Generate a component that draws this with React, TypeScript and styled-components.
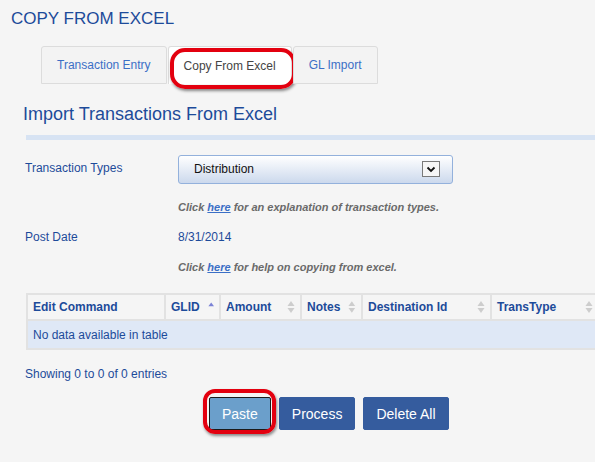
import * as React from 'react';
import styled, { createGlobalStyle } from 'styled-components';

const GlobalStyle = createGlobalStyle`
    html, body {
        margin: 0;
        padding: 0;
        background: #f5f5f5;
        font-family: "Liberation Sans", Arial, sans-serif;
        overflow: hidden;
    }
`;

const Page = styled.div`
    width: 595px;
    height: 462px;
    overflow: hidden;
    display: flex;
    flex-direction: column;
`;

const PageTitle = styled.h1`
    margin: 9px 0 0 11px;
    font-size: 17px;
    line-height: 20px;
    font-weight: normal;
    color: #1d4b9a;
`;

const TabBar = styled.div`
    display: flex;
    gap: 1px;
    margin: 17px 0 0 41px;
`;

const Tab = styled.div<{ $active?: boolean }>`
    position: relative;
    height: 38px;
    box-sizing: border-box;
    padding: 0 15px;
    display: flex;
    align-items: center;
    font-size: 12px;
    color: ${(p) => (p.$active ? '#444' : '#3b6fc6')};
    background: ${(p) => (p.$active ? '#fff' : '#f3f3f3')};
    border: 1px solid #dcdcdc;
    border-bottom: ${(p) => (p.$active ? 'none' : '1px solid #dcdcdc')};
    border-radius: 3px 3px 0 0;
`;

const Highlight = styled.span<{ $t: number; $r: number; $b: number; $l: number; $rad: number }>`
    position: absolute;
    top: ${(p) => p.$t}px;
    right: ${(p) => p.$r}px;
    bottom: ${(p) => p.$b}px;
    left: ${(p) => p.$l}px;
    border: 4px solid #e3000f;
    border-radius: ${(p) => p.$rad}px;
    box-shadow: 1px 2px 3px rgba(0, 0, 0, 0.45);
    pointer-events: none;
`;

const SectionTitle = styled.h2`
    margin: 19px 0 0 23px;
    font-size: 18px;
    line-height: 22px;
    font-weight: normal;
    color: #1d4b9a;
`;

const Divider = styled.div`
    margin: 10px 0 0 26px;
    height: 5px;
    background: #d7e3f3;
`;

const FormRow = styled.div<{ $h: number; $top: number }>`
    display: flex;
    align-items: center;
    height: ${(p) => p.$h}px;
    margin-top: ${(p) => p.$top}px;
    padding-left: 25px;
`;

const Label = styled.div<{ $shift?: number }>`
    width: 153px;
    font-size: 12px;
    color: #1d4b9a;
    margin-top: ${(p) => p.$shift ?? 0}px;
`;

const Value = styled.div`
    font-size: 12px;
    color: #1d4b9a;
`;

const Select = styled.div`
    width: 275px;
    height: 29px;
    box-sizing: border-box;
    border: 1px solid #93b1dc;
    border-radius: 3px;
    background: linear-gradient(#ffffff, #ccd9ed);
    display: flex;
    align-items: center;
    justify-content: space-between;
    padding: 0 12px 0 15px;
    font-size: 12px;
    color: #111;
`;

const ArrowBox = styled.span`
    width: 18px;
    height: 16px;
    box-sizing: border-box;
    border: 1px solid #7a7a7a;
    background: #f6f6f6;
    display: flex;
    align-items: center;
    justify-content: center;
`;

const Hint = styled.div<{ $top: number }>`
    margin-top: ${(p) => p.$top}px;
    font-size: 11px;
    font-style: italic;
    font-weight: bold;
    color: #6a6a6a;
    padding-left: 178px;
`;

const HintLink = styled.a`
    color: #3b6fc6;
    text-decoration: underline;
`;

const TableWrap = styled.div`
    margin: 20px 0 0 26px;
`;

const Table = styled.table`
    border-collapse: collapse;
    width: 572px;
    table-layout: fixed;
    border: 2px solid #e2e2e2;
`;

const HeadCell = styled.th<{ $w: number }>`
    width: ${(p) => p.$w}px;
    height: 26px;
    padding: 0 5px;
    box-sizing: border-box;
    text-align: left;
    font-size: 12px;
    font-weight: bold;
    color: #1d4b9a;
    background: #f5f5f5;
    border: 2px solid #e2e2e2;
`;

const HeadInner = styled.div<{ $tight?: boolean }>`
    display: flex;
    align-items: center;
    justify-content: ${(p) => (p.$tight ? 'flex-start' : 'space-between')};
    gap: 8px;
`;

const BodyCell = styled.td`
    height: 27px;
    padding: 0 5px;
    font-size: 12px;
    color: #1d4b9a;
    background: #dfe8f6;
    border: 2px solid #e2e2e2;
`;

const Info = styled.div`
    margin: 17px 0 0 25px;
    font-size: 12px;
    color: #1d4b9a;
`;

const ButtonRow = styled.div`
    display: flex;
    gap: 8px;
    margin: 16px 0 0 209px;
`;

const ButtonWrap = styled.div`
    position: relative;
    display: flex;
`;

const Button = styled.button<{ $light?: boolean }>`
    height: 33px;
    padding: 0 12px;
    font-family: "Liberation Sans", Arial, sans-serif;
    font-size: 14px;
    color: #fff;
    background: ${(p) => (p.$light ? '#6b9fcb' : '#355c9e')};
    border: 1px solid ${(p) => (p.$light ? '#1a1a1a' : '#355c9e')};
    border-radius: 2px;
    cursor: pointer;
`;

const SortIcon = ({ active }: { active?: boolean }) =>
    active ? (
        <svg width="9" height="14" viewBox="0 0 9 14">
            <path d="M0.5 6 L4.5 0.5 L8.5 6 Z" fill="#7b83d6" />
        </svg>
    ) : (
        <svg width="8" height="14" viewBox="0 0 8 14">
            <path d="M0.5 6 L4 1 L7.5 6 Z" fill="#cdcdcd" />
            <path d="M0.5 8 L4 13 L7.5 8 Z" fill="#cdcdcd" />
        </svg>
    );

const columns = [
    { title: 'Edit Command', width: 138 },
    { title: 'GLID', width: 55, sort: 'asc' },
    { title: 'Amount', width: 81, sort: 'both' },
    { title: 'Notes', width: 61, sort: 'both' },
    { title: 'Destination Id', width: 129, sort: 'both' },
    { title: 'TransType', width: 108, sort: 'both' },
];

export default function App() {
    return (
        <Page>
            <GlobalStyle />
            <PageTitle>COPY FROM EXCEL</PageTitle>
            <TabBar>
                <Tab>Transaction Entry</Tab>
                <Tab $active>
                    Copy From Excel
                    <Highlight $t={1} $r={-5} $b={-5} $l={1} $rad={15} />
                </Tab>
                <Tab>GL Import</Tab>
            </TabBar>

            <SectionTitle>Import Transactions From Excel</SectionTitle>
            <Divider />

            <FormRow $h={44} $top={7}>
                <Label $shift={-3}>Transaction Types</Label>
                <Select>
                    Distribution
                    <ArrowBox>
                        <svg width="10" height="7" viewBox="0 0 10 7">
                            <path d="M1.5 1.5 L5 5 L8.5 1.5" stroke="#111" strokeWidth="1.8" fill="none" />
                        </svg>
                    </ArrowBox>
                </Select>
            </FormRow>
            <Hint $top={10}>
                Click <HintLink>here</HintLink> for an explanation of transaction types.
            </Hint>
            <FormRow $h={31} $top={8}>
                <Label>Post Date</Label>
                <Value>8/31/2014</Value>
            </FormRow>
            <Hint $top={9}>
                Click <HintLink>here</HintLink> for help on copying from excel.
            </Hint>

            <TableWrap>
                <Table>
                    <thead>
                        <tr>
                            {columns.map((c) => (
                                <HeadCell key={c.title} $w={c.width}>
                                    <HeadInner $tight={c.sort === 'asc'}>
                                        <span>{c.title}</span>
                                        {c.sort && <SortIcon active={c.sort === 'asc'} />}
                                    </HeadInner>
                                </HeadCell>
                            ))}
                        </tr>
                    </thead>
                    <tbody>
                        <tr>
                            <BodyCell colSpan={6}>No data available in table</BodyCell>
                        </tr>
                    </tbody>
                </Table>
            </TableWrap>

            <Info>Showing 0 to 0 of 0 entries</Info>

            <ButtonRow>
                <ButtonWrap>
                    <Button $light>Paste</Button>
                    <Highlight $t={-8} $r={-5} $b={-4} $l={-6} $rad={12} />
                </ButtonWrap>
                <Button>Process</Button>
                <Button>Delete All</Button>
            </ButtonRow>
        </Page>
    );
}
